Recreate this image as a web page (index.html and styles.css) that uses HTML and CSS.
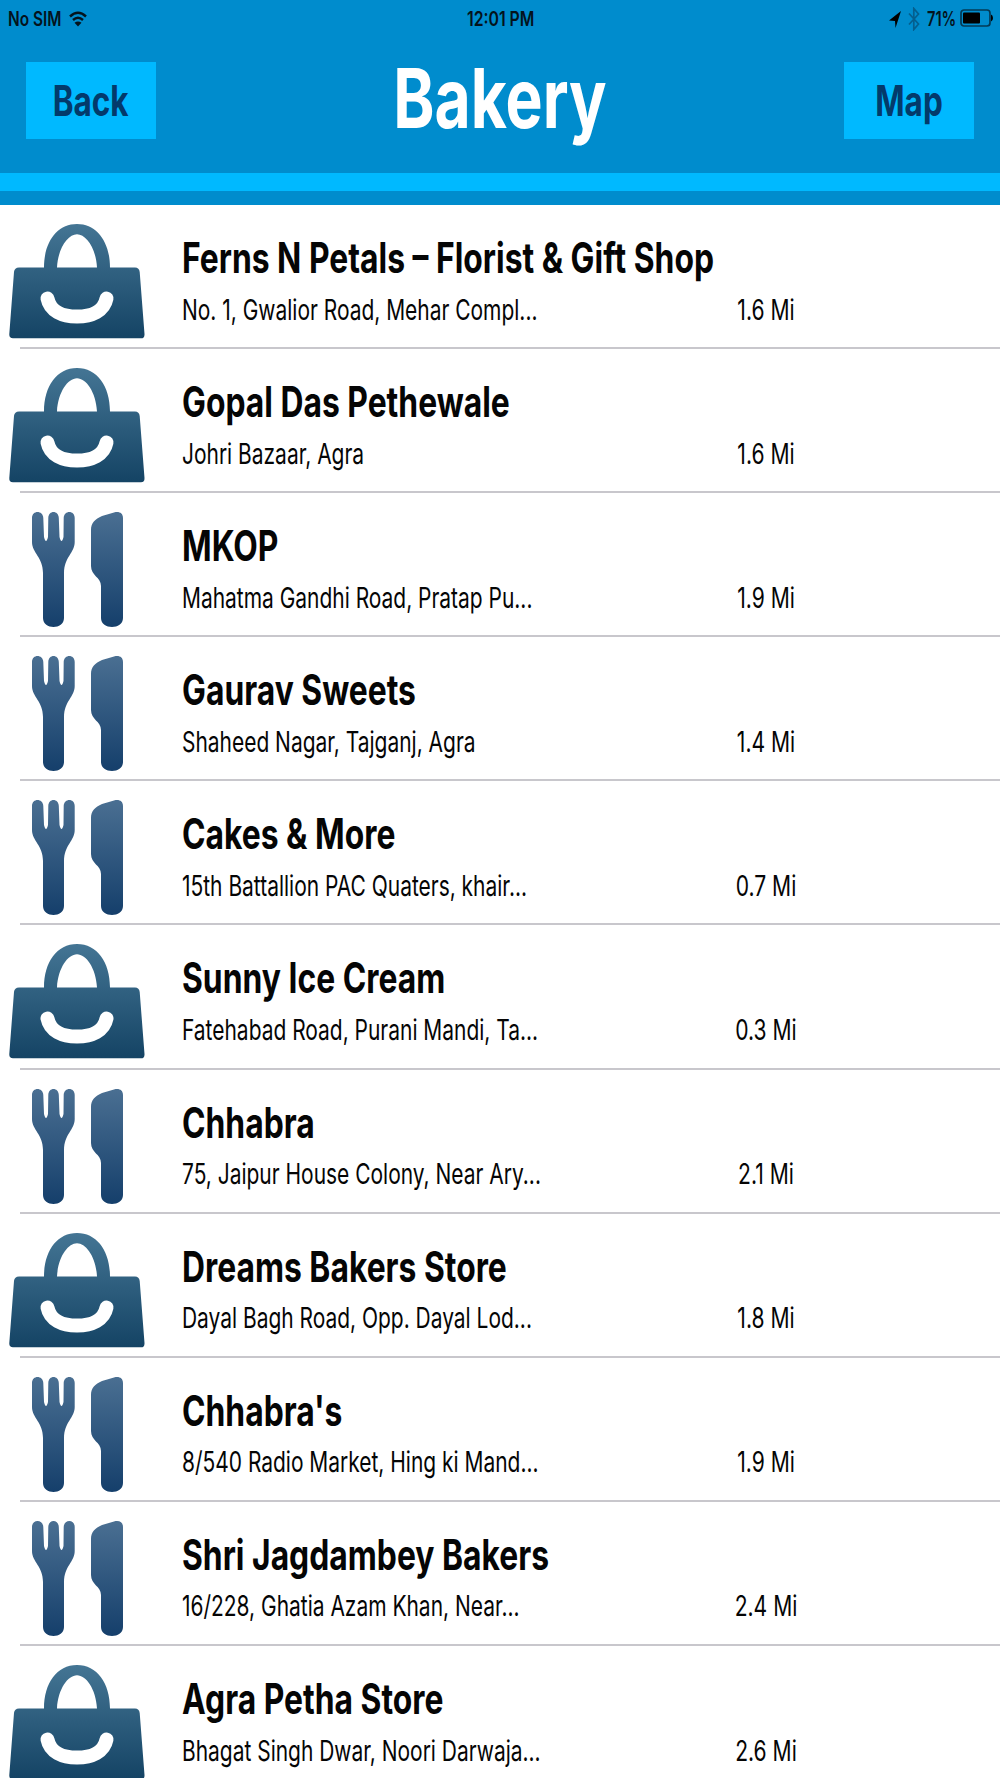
FILE: index.html
```html
<!DOCTYPE html>
<html lang="en">
<head>
    <meta charset="UTF-8">
    <meta name="viewport" content="width=device-width, initial-scale=1.0">
    <title>Bakery</title>
    <link rel="stylesheet" href="styles.css">
</head>
<body>

    <!-- Shared icons -->
    <svg class="icon-defs" width="0" height="0">
        <defs>
            <linearGradient id="bag-fill" gradientUnits="userSpaceOnUse" x1="0" y1="19" x2="0" y2="134">
                <stop offset="0" stop-color="#447594"/>
                <stop offset="1" stop-color="#144364"/>
            </linearGradient>
            <linearGradient id="food-fill" gradientUnits="userSpaceOnUse" x1="0" y1="19" x2="0" y2="134">
                <stop offset="0" stop-color="#4a6f92"/>
                <stop offset="1" stop-color="#153f6b"/>
            </linearGradient>
            <symbol id="bag" viewBox="0 0 160 144">
                <path fill="url(#bag-fill)" fill-rule="evenodd" d="M44 62.500C44 37 57 19 77 19S110 37 110 62.500H135Q139.200 62.500 139.700 67L144.500 129Q144.700 133.300 141 133.300H13Q9 133.300 9.300 129L14 67Q14.500 62.500 19 62.500ZM57 62.500H97C96 43 86 29.300 77 29.300S58 43 57 62.500Z"/>
                <path fill="none" stroke="#fff" stroke-width="14" stroke-linecap="round" d="M47.500 93.500C50 106 62 111.500 77 111.500S104 106 106.500 93.500"/>
            </symbol>
            <symbol id="food" viewBox="0 0 160 144">
                <path fill="url(#food-fill)" d="M32 25C32 17 43 17 43.300 25L44 44Q46 52 48 44L48.300 25C48.500 17 58.500 17 58.800 25L59.500 44Q61.500 52 63.500 44L63.700 25C64 17 74.700 17 74.700 25V49C74.700 60 64 64 64 80V125C64 137 43 137 43 125V80C43 64 32 60 32 49Z"/>
                <path fill="url(#food-fill)" d="M91 37C91 30 95 26 102 23L114 19.500C119 18 123 20 123 25V125C123 137 101 137 101 125V93C101 84 91 83 91 73Z"/>
            </symbol>
        </defs>
    </svg>

    <header class="header">
        <div class="status-bar">
            <div class="status-left">
                <span class="carrier">No SIM</span>
                <svg class="wifi" viewBox="0 0 18 16" width="18" height="16">
                    <path d="M1 5.500Q9-2 17 5.500M4 9Q9 4.500 14 9" fill="none" stroke="#04131c" stroke-width="2.400"/>
                    <path d="M5.500 11.800Q9 9 12.500 11.800L9 15.500Z" fill="#04131c"/>
                </svg>
            </div>
            <span class="clock">12:01 PM</span>
            <div class="status-right">
                <svg class="location" viewBox="0 0 12 17" width="12" height="17">
                    <path d="M12 0L0 9.500L6 10L6.500 17Z"/>
                </svg>
                <svg class="bluetooth" viewBox="0 0 12 24" width="12" height="24">
                    <path d="M1 6.500L10.500 17L5.800 22.500V1.500L10.500 7L1 17.500" fill="none" stroke="#045f8e" stroke-width="1.700"/>
                </svg>
                <span class="percent">71%</span>
                <svg class="battery" viewBox="0 0 33 18" width="33" height="18">
                    <rect x="1" y="1" width="29" height="16" rx="3" fill="none" stroke="#033a56" stroke-width="1.700"/>
                    <rect x="3" y="3.500" width="17" height="11" rx="1"/>
                    <path d="M31 5.500Q33 6 33 9T31 12.500Z"/>
                </svg>
            </div>
        </div>
        <div class="nav">
            <button class="nav-button"><span>Back</span></button>
            <h1 class="nav-title">Bakery</h1>
            <button class="nav-button"><span>Map</span></button>
        </div>
        <div class="stripe"></div>
    </header>

    <main class="list">
        <div class="row">
            <svg class="row-icon"><use href="#bag"/></svg>
            <div class="row-text">
                <h2 class="name">Ferns N Petals – Florist &amp; Gift Shop</h2>
                <div class="details">
                    <p class="address">No. 1, Gwalior Road, Mehar Compl...</p>
                    <p class="distance">1.6 Mi</p>
                </div>
            </div>
        </div>
        <div class="row">
            <svg class="row-icon"><use href="#bag"/></svg>
            <div class="row-text">
                <h2 class="name">Gopal Das Pethewale</h2>
                <div class="details">
                    <p class="address">Johri Bazaar, Agra</p>
                    <p class="distance">1.6 Mi</p>
                </div>
            </div>
        </div>
        <div class="row">
            <svg class="row-icon"><use href="#food"/></svg>
            <div class="row-text">
                <h2 class="name">MKOP</h2>
                <div class="details">
                    <p class="address">Mahatma Gandhi Road, Pratap Pu...</p>
                    <p class="distance">1.9 Mi</p>
                </div>
            </div>
        </div>
        <div class="row">
            <svg class="row-icon"><use href="#food"/></svg>
            <div class="row-text">
                <h2 class="name">Gaurav Sweets</h2>
                <div class="details">
                    <p class="address">Shaheed Nagar, Tajganj, Agra</p>
                    <p class="distance">1.4 Mi</p>
                </div>
            </div>
        </div>
        <div class="row">
            <svg class="row-icon"><use href="#food"/></svg>
            <div class="row-text">
                <h2 class="name">Cakes &amp; More</h2>
                <div class="details">
                    <p class="address">15th Battallion PAC Quaters, khair...</p>
                    <p class="distance">0.7 Mi</p>
                </div>
            </div>
        </div>
        <div class="row">
            <svg class="row-icon"><use href="#bag"/></svg>
            <div class="row-text">
                <h2 class="name">Sunny Ice Cream</h2>
                <div class="details">
                    <p class="address">Fatehabad Road, Purani Mandi, Ta...</p>
                    <p class="distance">0.3 Mi</p>
                </div>
            </div>
        </div>
        <div class="row">
            <svg class="row-icon"><use href="#food"/></svg>
            <div class="row-text">
                <h2 class="name">Chhabra</h2>
                <div class="details">
                    <p class="address">75, Jaipur House Colony, Near Ary...</p>
                    <p class="distance">2.1 Mi</p>
                </div>
            </div>
        </div>
        <div class="row">
            <svg class="row-icon"><use href="#bag"/></svg>
            <div class="row-text">
                <h2 class="name">Dreams Bakers Store</h2>
                <div class="details">
                    <p class="address">Dayal Bagh Road, Opp. Dayal Lod...</p>
                    <p class="distance">1.8 Mi</p>
                </div>
            </div>
        </div>
        <div class="row">
            <svg class="row-icon"><use href="#food"/></svg>
            <div class="row-text">
                <h2 class="name">Chhabra's</h2>
                <div class="details">
                    <p class="address">8/540 Radio Market, Hing ki Mand...</p>
                    <p class="distance">1.9 Mi</p>
                </div>
            </div>
        </div>
        <div class="row">
            <svg class="row-icon"><use href="#food"/></svg>
            <div class="row-text">
                <h2 class="name">Shri Jagdambey Bakers</h2>
                <div class="details">
                    <p class="address">16/228, Ghatia Azam Khan, Near...</p>
                    <p class="distance">2.4 Mi</p>
                </div>
            </div>
        </div>
        <div class="row">
            <svg class="row-icon"><use href="#bag"/></svg>
            <div class="row-text">
                <h2 class="name">Agra Petha Store</h2>
                <div class="details">
                    <p class="address">Bhagat Singh Dwar, Noori Darwaja...</p>
                    <p class="distance">2.6 Mi</p>
                </div>
            </div>
        </div>
    </main>

</body>
</html>
```

FILE: styles.css
```css
* {
    box-sizing: border-box;
}

body {
    margin: 0;
    height: 1778px;
    overflow: hidden;
    background-color: #fff;
    color: #050505;
    font-family: Inter, "Liberation Sans", sans-serif;
}

h1, h2, p {
    margin: 0;
    font-weight: inherit;
    white-space: nowrap;
}

.icon-defs {
    display: block;
}

/* Header */
.header {
    height: 205px;
    background-color: #008ccd;
}

.status-bar {
    display: grid;
    grid-template-columns: 1fr auto 1fr;
    align-items: center;
    height: 38px;
    padding: 0 7px 0 8px;
    font-size: 20px;
    font-weight: 600;
    line-height: 38px;
    color: #04131c;
}

.status-left,
.status-right {
    display: flex;
    align-items: center;
}

.status-right {
    justify-content: flex-end;
}

.carrier {
    width: 61px;
    white-space: nowrap;
    transform: scaleX(0.77);
    transform-origin: left;
}

.clock {
    transform: scaleX(0.79);
}

.percent {
    width: 33px;
    transform: scaleX(0.73);
    transform-origin: left;
}

.battery {
    margin-bottom: 2px;
}

.location {
    margin-right: 7px;
}

.bluetooth {
    margin-right: 7px;
}

.nav {
    display: flex;
    align-items: flex-start;
    justify-content: space-between;
    height: 135px;
    padding: 24px 26px 0;
}

.nav-button {
    width: 130px;
    height: 77px;
    padding: 0;
    border: none;
    background-color: #00b9ff;
    color: #033a6b;
    font-family: inherit;
    font-size: 42px;
    font-weight: 700;
}

.nav-button span {
    display: inline-block;
    transform: scaleX(0.75);
}

.nav-title {
    margin-top: -6px;
    color: #fff;
    font-size: 83px;
    font-weight: 700;
    line-height: 84px;
    transform: scaleX(0.752);
}

.stripe {
    height: 18px;
    background-color: #00b9ff;
}

/* Place list */
.row {
    display: flex;
    height: 144.1px;
    background: linear-gradient(#c8c7cc, #c8c7cc) 20px 100% / 100% 2px no-repeat;
}

.row-icon {
    flex: none;
    width: 160px;
    height: 144px;
}

.row-text {
    flex: 1;
    padding: 27px 0 0 22px;
}

.name {
    width: max-content;
    font-size: 42px;
    font-weight: 700;
    line-height: 51px;
    transform: scaleX(0.758);
    transform-origin: left;
}

.details {
    display: grid;
    grid-template-columns: 524px 120px;
    padding-top: 9.6px;
    font-size: 28.5px;
    line-height: 34px;
}

.address {
    transform: scaleX(0.735);
    transform-origin: left;
}

.distance {
    text-align: center;
    transform: scaleX(0.74);
}
```
